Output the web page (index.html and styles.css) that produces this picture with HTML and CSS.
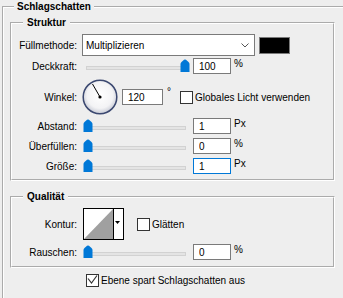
FILE: index.html
```html
<!DOCTYPE html>
<html lang="de">
<head>
    <meta charset="UTF-8">
    <meta name="viewport" content="width=device-width, initial-scale=1.0">
    <title>Schlagschatten</title>
    <link rel="stylesheet" href="styles.css">
</head>
<body>
    <fieldset class="group outer">
        <legend>Schlagschatten</legend>

        <!-- Struktur -->
        <fieldset class="group struktur">
            <legend>Struktur</legend>

            <div class="row row-blend">
                <span class="lbl">Füllmethode:</span>
                <div class="select">
                    <span>Multiplizieren</span>
                    <svg class="chevron" width="8" height="5" viewBox="0 0 8 5"><polyline points="0.5,0.5 4,4 7.5,0.5" fill="none" stroke="#555" stroke-width="1"/></svg>
                </div>
                <div class="swatch"></div>
            </div>

            <div class="row row-opacity">
                <span class="lbl">Deckkraft:</span>
                <div class="slider">
                    <div class="track"></div>
                    <svg class="thumb" style="left: 98px" width="10" height="13" viewBox="0 0 10 13"><path d="M0.5 5 Q0.5 4 1.5 3 L4 0.8 Q5 0 6 0.8 L8.5 3 Q9.5 4 9.5 5 V13 H0.5 Z" fill="#0078d7"/></svg>
                </div>
                <input class="num" type="text" value="100">
                <span class="unit">%</span>
            </div>

            <div class="row row-angle">
                <span class="lbl">Winkel:</span>
                <svg class="dial" width="36" height="36" viewBox="0 0 36 36">
                    <defs>
                        <radialGradient id="dialFill" cx="50%" cy="45%" r="55%">
                            <stop offset="0" stop-color="#ffffff"/>
                            <stop offset="0.7" stop-color="#f3f3f5"/>
                            <stop offset="1" stop-color="#c6c9d4"/>
                        </radialGradient>
                    </defs>
                    <circle cx="18" cy="18" r="16.8" fill="url(#dialFill)" stroke="#3b4870" stroke-width="1.5"/>
                    <line x1="18" y1="18" x2="10.5" y2="5" stroke="#000" stroke-width="1"/>
                    <circle cx="18" cy="18" r="1.6" fill="#000"/>
                </svg>
                <input class="num num-angle" type="text" value="120">
                <span class="deg">°</span>
                <span class="check"></span>
                <span class="check-text">Globales Licht verwenden</span>
            </div>

            <div class="row row-small">
                <span class="lbl">Abstand:</span>
                <div class="slider">
                    <div class="track"></div>
                    <svg class="thumb" style="left: 1px" width="10" height="13" viewBox="0 0 10 13"><path d="M0.5 5 Q0.5 4 1.5 3 L4 0.8 Q5 0 6 0.8 L8.5 3 Q9.5 4 9.5 5 V13 H0.5 Z" fill="#0078d7"/></svg>
                </div>
                <input class="num" type="text" value="1">
                <span class="unit">Px</span>
            </div>

            <div class="row row-small">
                <span class="lbl">Überfüllen:</span>
                <div class="slider">
                    <div class="track"></div>
                    <svg class="thumb" style="left: 1px" width="10" height="13" viewBox="0 0 10 13"><path d="M0.5 5 Q0.5 4 1.5 3 L4 0.8 Q5 0 6 0.8 L8.5 3 Q9.5 4 9.5 5 V13 H0.5 Z" fill="#0078d7"/></svg>
                </div>
                <input class="num" type="text" value="0">
                <span class="unit">%</span>
            </div>

            <div class="row row-small">
                <span class="lbl">Größe:</span>
                <div class="slider">
                    <div class="track"></div>
                    <svg class="thumb" style="left: 1px" width="10" height="13" viewBox="0 0 10 13"><path d="M0.5 5 Q0.5 4 1.5 3 L4 0.8 Q5 0 6 0.8 L8.5 3 Q9.5 4 9.5 5 V13 H0.5 Z" fill="#0078d7"/></svg>
                </div>
                <input class="num focus" type="text" value="1">
                <span class="unit">Px</span>
            </div>
        </fieldset>

        <!-- Qualität -->
        <fieldset class="group qualitaet">
            <legend>Qualität</legend>

            <div class="row row-contour">
                <span class="lbl">Kontur:</span>
                <svg class="curve" width="41" height="32" viewBox="0 0 41 32">
                    <rect x="0.5" y="0.5" width="40" height="31" fill="#fff" stroke="#000"/>
                    <polygon points="1,31 30,1 30,31" fill="#a0a0a0"/>
                    <line x1="30.5" y1="0" x2="30.5" y2="32" stroke="#000"/>
                    <polygon points="32,13 37,13 34.5,16" fill="#000"/>
                </svg>
                <span class="check check-smooth"></span>
                <span class="check-text">Glätten</span>
            </div>

            <div class="row row-small">
                <span class="lbl">Rauschen:</span>
                <div class="slider">
                    <div class="track"></div>
                    <svg class="thumb" style="left: 1px" width="10" height="13" viewBox="0 0 10 13"><path d="M0.5 5 Q0.5 4 1.5 3 L4 0.8 Q5 0 6 0.8 L8.5 3 Q9.5 4 9.5 5 V13 H0.5 Z" fill="#0078d7"/></svg>
                </div>
                <input class="num" type="text" value="0">
                <span class="unit">%</span>
            </div>
        </fieldset>

        <div class="row row-knockout">
            <span class="check">
                <svg width="11" height="11" viewBox="0 0 11 11"><polyline points="1,3.5 4.5,8 10,0.5" fill="none" stroke="#333" stroke-width="1.2"/></svg>
            </span>
            <span class="check-text">Ebene spart Schlagschatten aus</span>
        </div>
    </fieldset>
</body>
</html>
```

FILE: styles.css
```css
* {
    box-sizing: border-box;
}

body {
    margin: 0;
    width: 343px;
    height: 298px;
    overflow: hidden;
    background-color: #eeeeee;
    color: #000;
    font-family: "Liberation Sans", Arial, sans-serif;
    font-size: 10px;
}

/* Gruppenrahmen */
.group {
    margin: 0;
    min-width: 0;
    border: 2px groove #ffffff;
    padding: 4px 0 5px 0;
}

.group legend {
    font-weight: bold;
    line-height: 14px;
    padding: 0 4px;
    margin-left: 11px;
}

/* der äußere Rahmen läuft rechts und unten aus dem Fenster */
.outer {
    margin: 0 0 0 2px;
    padding: 2px 8px 11px 6px;
    border-right: none;
    border-bottom: none;
}

.outer > legend {
    padding: 0 3px;
    margin-left: 4px;
}

.qualitaet {
    margin-top: 9px;
    padding-bottom: 6px;
}

/* Zeilen */
.row {
    display: flex;
    align-items: center;
}

.lbl {
    width: 65px;
    margin-right: 5px;
    text-align: right;
    white-space: nowrap;
}

.row-blend {
    height: 22px;
}

.row-opacity {
    height: 16px;
    margin-top: 2px;
}

.row-angle {
    height: 36px;
    margin-top: 5px;
}

.row-small {
    height: 16px;
    margin-top: 4px;
}

.row-angle + .row-small {
    margin-top: 3px;
}

.row-contour {
    height: 32px;
}

.row-knockout {
    margin-top: 6px;
    padding-left: 76px;
}

/* Füllmethode */
.select {
    display: flex;
    align-items: center;
    width: 173px;
    height: 22px;
    padding-left: 3px;
    background-color: #fff;
    border: 1px solid #7a7a7a;
}

.chevron {
    margin-left: auto;
    margin-right: 5px;
}

.swatch {
    width: 31px;
    height: 17px;
    margin-left: 4px;
    background-color: #000;
    border: 1px solid #7a7a7a;
}

/* Regler */
.slider {
    position: relative;
    width: 108px;
    height: 16px;
}

.track {
    position: absolute;
    left: 4px;
    right: 4px;
    top: 8px;
    height: 4px;
    background-color: #e4e4e4;
    border: 1px solid #d2d2d2;
}

.thumb {
    position: absolute;
    top: 1px;
}

.num {
    width: 38px;
    height: 16px;
    margin: 0 0 0 3px;
    padding: 0 0 0 5px;
    border: 1px solid #7a7a7a;
    background-color: #fff;
    font-family: inherit;
    font-size: 10px;
    color: #000;
    outline: none;
}

.num.focus {
    border-color: #0078d7;
}

.num-angle {
    width: 41px;
    margin-left: 4px;
}

.unit {
    align-self: flex-start;
    margin-left: 3px;
    line-height: 12px;
}

.deg {
    align-self: flex-start;
    margin: 7px 0 0 4px;
    line-height: 12px;
}

/* Kontrollkästchen */
.check {
    display: flex;
    align-items: center;
    justify-content: center;
    width: 13px;
    height: 13px;
    margin-left: 9px;
    background-color: #fff;
    border: 1px solid #333;
}

.row-knockout .check {
    margin-left: 0;
}

.check-text {
    margin-left: 2px;
    white-space: nowrap;
}

.curve {
    margin-left: 1px;
}

.check-smooth {
    margin-left: 13px;
}
```
